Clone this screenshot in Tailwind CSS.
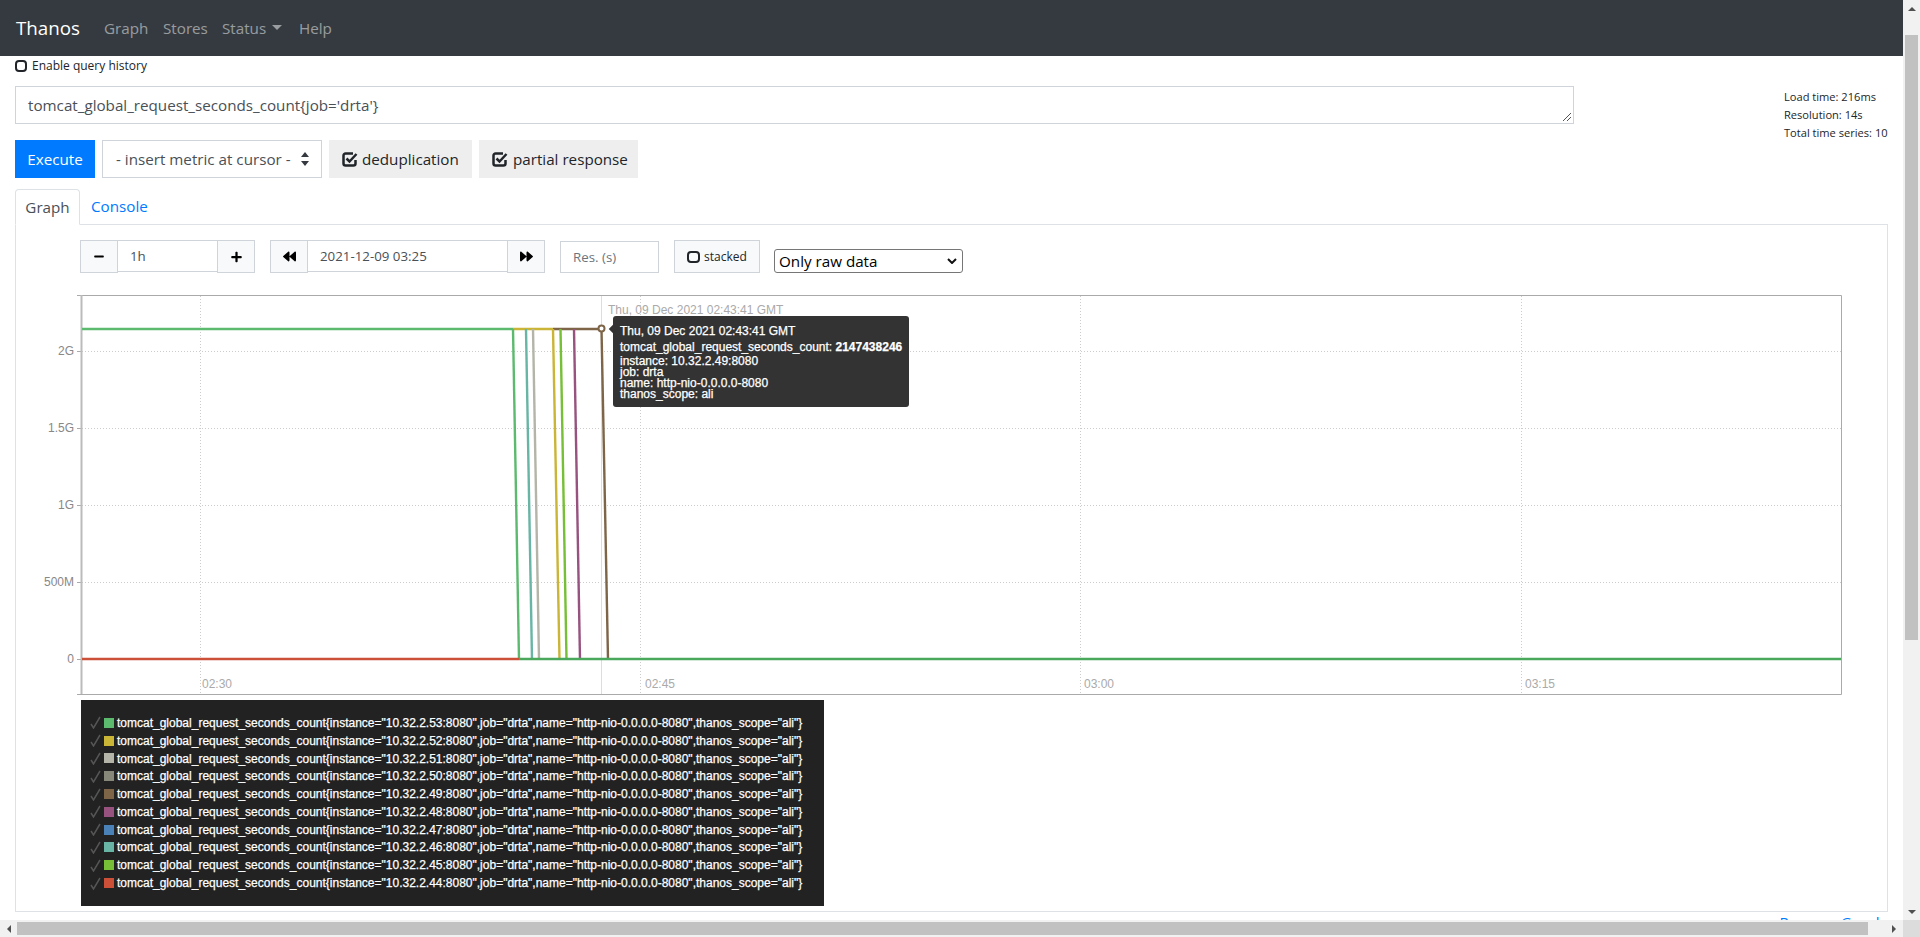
<!DOCTYPE html>
<html lang="en">
<head>
    <meta charset="UTF-8">
    <title>Thanos | Graph</title>
    <script src="https://cdn.jsdelivr.net/npm/@tailwindcss/browser@4"></script>
</head>
<body class="w-[1920px] h-[937px] overflow-hidden bg-white font-['Open_Sans',sans-serif] text-[#212529]">
<div class="flex flex-col h-[937px]">
    <div class="flex h-[920px]">
        <div class="w-[1903px] h-[920px] overflow-hidden">
            <!-- navbar -->
            <nav class="flex items-center h-[56px] bg-[#343a40] pl-[16px]">
                <span class="text-[18.8px] text-white w-[88px]">Thanos</span>
                <span class="text-[15.2px] text-white/50 w-[59px]">Graph</span>
                <span class="text-[15.2px] text-white/50 w-[59px]">Stores</span>
                <span class="text-[15.2px] text-white/50 w-[77px] flex items-center">Status
                    <span class="ml-[6px] w-0 h-0 border-x-[5px] border-x-transparent border-t-[5px] border-t-white/50"></span>
                </span>
                <span class="text-[15.2px] text-white/50">Help</span>
            </nav>

            <div class="pl-[15px] pr-[15px]">
                <label class="flex items-center h-[18px] mt-[1px] text-[12px] leading-none">
                    <svg class="w-[12px] h-[12px] mr-[5px]" viewBox="0 0 12 12"><rect x="1" y="1" width="10" height="10" rx="3" fill="none" stroke="#212529" stroke-width="2"/></svg>
                    Enable query history
                </label>

                <!-- query box -->
                <div class="flex h-[38px] mt-[11px]">
                    <div class="relative shrink-0 w-[1559px] h-[38px] border border-[#ced4da] text-[15.2px] text-[#495057] pl-[12px] leading-[36px]">
                        tomcat_global_request_seconds_count{job='drta'}
                        <svg class="absolute right-[1px] bottom-[1px] w-[10px] h-[10px]" viewBox="0 0 10 10"><path d="M1 9 9 1M5 9 9 5" stroke="#555" stroke-width="1"/></svg>
                    </div>
                    <div class="shrink-0 ml-[210px] mt-[2px] text-[11.1px] leading-[18px] whitespace-nowrap">
                        <div>Load time: 216ms</div>
                        <div>Resolution: 14s</div>
                        <div>Total time series: 10</div>
                    </div>
                </div>

                <!-- actions -->
                <div class="flex gap-[7px] mt-[16px] h-[38px] text-[15.2px] leading-[38px]">
                    <div class="w-[80px] bg-[#007bff] text-white text-center">Execute</div>
                    <div class="flex items-center justify-between w-[220px] border border-[#ced4da] text-[#495057] pl-[13px] pr-[12px]">
                        - insert metric at cursor -
                        <svg class="w-[8px] h-[14px]" viewBox="0 0 8 14"><path d="M4 0 8 5H0ZM4 14 0 9H8Z" fill="#343a40"/></svg>
                    </div>
                    <div class="flex items-center w-[143px] bg-[#eee] pl-[13px]">
                        <svg class="w-[16px] h-[15px] mr-[4px]" viewBox="0 0 16 15"><path d="M11 1.500H3.500A2 2 0 0 0 1.500 3.500V11.500A2 2 0 0 0 3.500 13.500H11.500A2 2 0 0 0 13.500 11.500V8" fill="none" stroke="#212529" stroke-width="2.500"/><path d="M4.500 6.500 7.500 9.500 14.500 2" fill="none" stroke="#212529" stroke-width="2.500"/></svg>
                        deduplication
                    </div>
                    <div class="flex items-center w-[159px] bg-[#eee] pl-[13px]">
                        <svg class="w-[16px] h-[15px] mr-[5px]" viewBox="0 0 16 15"><path d="M11 1.500H3.500A2 2 0 0 0 1.500 3.500V11.500A2 2 0 0 0 3.500 13.500H11.500A2 2 0 0 0 13.500 11.500V8" fill="none" stroke="#212529" stroke-width="2.500"/><path d="M4.500 6.500 7.500 9.500 14.500 2" fill="none" stroke="#212529" stroke-width="2.500"/></svg>
                        partial response
                    </div>
                </div>

                <!-- tabs -->
                <div class="flex w-[1873px] h-[36px] mt-[11px] border-b border-[#dee2e6] text-[15.2px] leading-[34px]">
                    <div class="w-[65px] h-[36px] border border-[#dee2e6] border-b-white rounded-t-[4px] text-center text-[#495057] bg-white">Graph</div>
                    <div class="ml-[11px] text-[#007bff]">Console</div>
                </div>

                <!-- tab content -->
                <div class="w-[1873px] h-[687px] border-x border-b border-[#dee2e6] pl-[64px] pt-[15px]">
                    <div class="flex items-start h-[33px] text-[13.3px] text-[#495057]">
                        <div class="flex h-[33px] w-[175px]">
                            <div class="flex items-center justify-center w-[38px] bg-[#f8f9fa] border border-[#ced4da]"><svg class="w-[10px] h-[11px]" viewBox="0 0 448 512"><path d="M416 208H32c-17.67 0-32 14.33-32 32v32c0 17.67 14.33 32 32 32h384c17.67 0 32-14.33 32-32v-32c0-17.67-14.33-32-32-32z"/></svg></div>
                            <div class="w-[99px] h-[32px] border-y border-[#ced4da] pl-[12px] leading-[30px]">1h</div>
                            <div class="flex items-center justify-center w-[38px] bg-[#f8f9fa] border border-[#ced4da]"><svg class="w-[11px] h-[12px]" viewBox="0 0 448 512"><path d="M416 208H272V64c0-17.67-14.33-32-32-32h-32c-17.67 0-32 14.33-32 32v144H32c-17.67 0-32 14.33-32 32v32c0 17.67 14.33 32 32 32h144v144c0 17.67 14.33 32 32 32h32c17.67 0 32-14.33 32-32V304h144c17.67 0 32-14.33 32-32v-32c0-17.67-14.33-32-32-32z"/></svg></div>
                        </div>
                        <div class="flex h-[33px] w-[275px] ml-[15px]">
                            <div class="flex items-center justify-center w-[38px] bg-[#f8f9fa] border border-[#ced4da]"><svg class="w-[13px] h-[13px]" viewBox="0 0 512 512"><path d="M11.5 280.6l192 160c20.6 17.2 52.5 2.8 52.5-24.6V96c0-27.4-31.9-41.8-52.5-24.6l-192 160c-15.3 12.8-15.3 36.4 0 49.2zm256 0l192 160c20.6 17.2 52.5 2.8 52.5-24.6V96c0-27.4-31.9-41.8-52.5-24.6l-192 160c-15.3 12.8-15.3 36.4 0 49.2z"/></svg></div>
                            <div class="w-[199px] h-[32px] border-y border-[#ced4da] pl-[12px] leading-[30px]">2021-12-09 03:25</div>
                            <div class="flex items-center justify-center w-[38px] bg-[#f8f9fa] border border-[#ced4da]"><svg class="w-[13px] h-[13px]" viewBox="0 0 512 512"><path d="M500.5 231.4l-192-160C287.9 54.3 256 68.6 256 96v320c0 27.4 31.9 41.8 52.5 24.6l192-160c15.3-12.8 15.3-36.4 0-49.2zm-256 0l-192-160C31.9 54.3 0 68.6 0 96v320c0 27.4 31.9 41.8 52.5 24.6l192-160c15.3-12.8 15.3-36.4 0-49.2z"/></svg></div>
                        </div>
                        <div class="w-[99px] h-[32px] mt-[1px] ml-[15px] border border-[#ced4da] pl-[12px] leading-[30px] text-[#6c757d]">Res. (s)</div>
                        <div class="flex items-center w-[86px] h-[33px] ml-[15px] bg-[#f8f9fa] border border-[#ced4da] pl-[12px] text-[12px] text-[#212529]">
                            <svg class="w-[13px] h-[12px] mr-[4px]" viewBox="0 0 13 12"><rect x="1" y="1" width="11" height="10" rx="3" fill="none" stroke="#212529" stroke-width="2"/></svg>
                            stacked
                        </div>
                        <div class="flex items-center justify-between w-[189px] h-[24px] mt-[9px] ml-[14px] border border-[#767676] rounded-[3px] pl-[4px] pr-[5px] text-[15.2px] text-black">
                            Only raw data
                            <svg class="w-[10px] h-[6px]" viewBox="0 0 10 6"><path d="M1 1 5 5 9 1" fill="none" stroke="#111" stroke-width="2"/></svg>
                        </div>
                    </div>

                    <div class="relative w-[1762px] h-[400px] mt-[22px] ml-[1px] font-['Liberation_Sans',sans-serif] text-[12px] leading-none">
                        <svg class="absolute left-0 top-0 overflow-visible" width="1762" height="400" viewBox="81 295 1762 400">
                            <g stroke="#ccc" stroke-width="1" stroke-dasharray="1 2">
                                <path d="M82 351.5H1841M82 428.5H1841M82 505.5H1841M82 582.5H1841"/>
                                <path d="M200.5 296V694M640.5 296V694M1080.5 296V694M1521.5 296V694"/>
                            </g>
                            <path d="M601.5 296V694" stroke="#ddd"/>
                            <path d="M77 295.5H1841.5V694.5H77M77 351.5H81M77 428.5H81M77 505.5H81M77 582.5H81M77 659.5H81" fill="none" stroke="#aaa"/>
                            <path d="M81.5 295V694" stroke="#bbb" stroke-width="2"/>
                            <g fill="none" stroke-width="2.400">
                                <path d="M82 329H513" stroke="#5cba6f"/>
                                <path d="M513 329H553" stroke="#cbb537"/>
                                <path d="M553 329H601.5" stroke="#7e6548"/>
                                <path d="M513 329 519 659" stroke="#5cba6f"/>
                                <path d="M526 329 532 659" stroke="#68b5a5"/>
                                <path d="M533 329 539 659" stroke="#b4b5a8"/>
                                <path d="M553 329 559.5 659" stroke="#cbb537"/>
                                <path d="M560.5 329 566.5 659" stroke="#76bf36"/>
                                <path d="M574 329 580 659" stroke="#97527f"/>
                                <path d="M601.5 329 608 659" stroke="#7e6548"/>
                                <path d="M82 659H519" stroke="#cc5038"/>
                                <path d="M519 659H1841" stroke="#4aa85c"/>
                            </g>
                            <circle cx="601.5" cy="328.5" r="3" fill="#fff" stroke="#7e6548" stroke-width="2"/>
                        </svg>
                        <span class="absolute right-[1769px] top-[50px] text-[#888]">2G</span>
                        <span class="absolute right-[1769px] top-[127px] text-[#888]">1.5G</span>
                        <span class="absolute right-[1769px] top-[204px] text-[#888]">1G</span>
                        <span class="absolute right-[1769px] top-[281px] text-[#888]">500M</span>
                        <span class="absolute right-[1769px] top-[358px] text-[#888]">0</span>
                        <span class="absolute left-[121px] top-[383px] text-[#aaa]">02:30</span>
                        <span class="absolute left-[564px] top-[383px] text-[#aaa]">02:45</span>
                        <span class="absolute left-[1003px] top-[383px] text-[#aaa]">03:00</span>
                        <span class="absolute left-[1444px] top-[383px] text-[#aaa]">03:15</span>
                        <span class="absolute left-[527px] top-[9px] text-[#aaa] whitespace-nowrap">Thu, 09 Dec 2021 02:43:41 GMT</span>

                        <div class="absolute left-[532px] top-[21px] w-[296px] h-[91px] bg-[#333] rounded-[3px] text-white pl-[7px] pt-[9px] whitespace-nowrap [-webkit-text-stroke:0.25px_white]">
                            <span class="absolute left-[-3px] top-[10px] w-[6px] h-[6px] bg-[#333] rotate-45"></span>
                            <div class="h-[16px]">Thu, 09 Dec 2021 02:43:41 GMT</div>
                            <div class="h-[14px]">tomcat_global_request_seconds_count: <b>2147438246</b></div>
                            <div class="h-[11px]">instance: 10.32.2.49:8080</div>
                            <div class="h-[11px]">job: drta</div>
                            <div class="h-[11px]">name: http-nio-0.0.0.0-8080</div>
                            <div class="h-[11px]">thanos_scope: ali</div>
                        </div>
                    </div>

                    <!-- legend -->
                    <div class="w-[743px] h-[206px] mt-[5px] ml-[1px] bg-[#222] pt-[14px] pl-[9px] font-['Liberation_Sans',sans-serif] text-[12px] text-white [-webkit-text-stroke:0.25px_white]">
                        <div class="flex items-center h-[17.8px]"><svg class="w-[11px] h-[13px] mr-[3px]" viewBox="0 0 11 13"><path d="M1 8 3.500 12 10 1" fill="none" stroke="#555" stroke-width="1.500"/></svg><span class="w-[10px] h-[10px] mr-[3px] bg-[#5cba6f]"></span>tomcat_global_request_seconds_count{instance="10.32.2.53:8080",job="drta",name="http-nio-0.0.0.0-8080",thanos_scope="ali"}</div>
                        <div class="flex items-center h-[17.8px]"><svg class="w-[11px] h-[13px] mr-[3px]" viewBox="0 0 11 13"><path d="M1 8 3.500 12 10 1" fill="none" stroke="#555" stroke-width="1.500"/></svg><span class="w-[10px] h-[10px] mr-[3px] bg-[#cbb537]"></span>tomcat_global_request_seconds_count{instance="10.32.2.52:8080",job="drta",name="http-nio-0.0.0.0-8080",thanos_scope="ali"}</div>
                        <div class="flex items-center h-[17.8px]"><svg class="w-[11px] h-[13px] mr-[3px]" viewBox="0 0 11 13"><path d="M1 8 3.500 12 10 1" fill="none" stroke="#555" stroke-width="1.500"/></svg><span class="w-[10px] h-[10px] mr-[3px] bg-[#b4b5a8]"></span>tomcat_global_request_seconds_count{instance="10.32.2.51:8080",job="drta",name="http-nio-0.0.0.0-8080",thanos_scope="ali"}</div>
                        <div class="flex items-center h-[17.8px]"><svg class="w-[11px] h-[13px] mr-[3px]" viewBox="0 0 11 13"><path d="M1 8 3.500 12 10 1" fill="none" stroke="#555" stroke-width="1.500"/></svg><span class="w-[10px] h-[10px] mr-[3px] bg-[#87887a]"></span>tomcat_global_request_seconds_count{instance="10.32.2.50:8080",job="drta",name="http-nio-0.0.0.0-8080",thanos_scope="ali"}</div>
                        <div class="flex items-center h-[17.8px]"><svg class="w-[11px] h-[13px] mr-[3px]" viewBox="0 0 11 13"><path d="M1 8 3.500 12 10 1" fill="none" stroke="#555" stroke-width="1.500"/></svg><span class="w-[10px] h-[10px] mr-[3px] bg-[#7e6548]"></span>tomcat_global_request_seconds_count{instance="10.32.2.49:8080",job="drta",name="http-nio-0.0.0.0-8080",thanos_scope="ali"}</div>
                        <div class="flex items-center h-[17.8px]"><svg class="w-[11px] h-[13px] mr-[3px]" viewBox="0 0 11 13"><path d="M1 8 3.500 12 10 1" fill="none" stroke="#555" stroke-width="1.500"/></svg><span class="w-[10px] h-[10px] mr-[3px] bg-[#97527f]"></span>tomcat_global_request_seconds_count{instance="10.32.2.48:8080",job="drta",name="http-nio-0.0.0.0-8080",thanos_scope="ali"}</div>
                        <div class="flex items-center h-[17.8px]"><svg class="w-[11px] h-[13px] mr-[3px]" viewBox="0 0 11 13"><path d="M1 8 3.500 12 10 1" fill="none" stroke="#555" stroke-width="1.500"/></svg><span class="w-[10px] h-[10px] mr-[3px] bg-[#4a81b6]"></span>tomcat_global_request_seconds_count{instance="10.32.2.47:8080",job="drta",name="http-nio-0.0.0.0-8080",thanos_scope="ali"}</div>
                        <div class="flex items-center h-[17.8px]"><svg class="w-[11px] h-[13px] mr-[3px]" viewBox="0 0 11 13"><path d="M1 8 3.500 12 10 1" fill="none" stroke="#555" stroke-width="1.500"/></svg><span class="w-[10px] h-[10px] mr-[3px] bg-[#68b5a5]"></span>tomcat_global_request_seconds_count{instance="10.32.2.46:8080",job="drta",name="http-nio-0.0.0.0-8080",thanos_scope="ali"}</div>
                        <div class="flex items-center h-[17.8px]"><svg class="w-[11px] h-[13px] mr-[3px]" viewBox="0 0 11 13"><path d="M1 8 3.500 12 10 1" fill="none" stroke="#555" stroke-width="1.500"/></svg><span class="w-[10px] h-[10px] mr-[3px] bg-[#76bf36]"></span>tomcat_global_request_seconds_count{instance="10.32.2.45:8080",job="drta",name="http-nio-0.0.0.0-8080",thanos_scope="ali"}</div>
                        <div class="flex items-center h-[17.8px]"><svg class="w-[11px] h-[13px] mr-[3px]" viewBox="0 0 11 13"><path d="M1 8 3.500 12 10 1" fill="none" stroke="#555" stroke-width="1.500"/></svg><span class="w-[10px] h-[10px] mr-[3px] bg-[#cc5038]"></span>tomcat_global_request_seconds_count{instance="10.32.2.44:8080",job="drta",name="http-nio-0.0.0.0-8080",thanos_scope="ali"}</div>
                    </div>
                </div>
                <div class="w-[1873px] text-right pr-[3px] text-[15.2px] text-[#007bff] leading-[20px]">Remove Graph</div>
            </div>
        </div>
        <!-- vertical scrollbar -->
        <div class="flex flex-col items-center w-[17px] bg-[#f1f1f1]">
            <div class="flex items-center justify-center h-[17px] w-full"><span class="w-0 h-0 border-x-[4px] border-x-transparent border-b-[4px] border-b-[#505050]"></span></div>
            <div class="w-[13px] h-[605px] mt-[18px] bg-[#c1c1c1]"></div>
            <div class="flex items-center justify-center h-[17px] w-full mt-auto"><span class="w-0 h-0 border-x-[4px] border-x-transparent border-t-[4px] border-t-[#505050]"></span></div>
        </div>
    </div>
    <!-- horizontal scrollbar -->
    <div class="flex items-center h-[17px] bg-[#f1f1f1]">
        <div class="flex items-center justify-center w-[17px] h-full"><span class="w-0 h-0 border-y-[4px] border-y-transparent border-r-[4px] border-r-[#505050]"></span></div>
        <div class="w-[1851px] h-[13px] bg-[#c1c1c1]"></div>
        <div class="flex items-center justify-center w-[18px] h-full ml-auto"><span class="w-0 h-0 border-y-[4px] border-y-transparent border-l-[4px] border-l-[#505050]"></span></div>
        <div class="w-[17px] h-full bg-[#dcdcdc]"></div>
    </div>
</div>
</body>
</html>
